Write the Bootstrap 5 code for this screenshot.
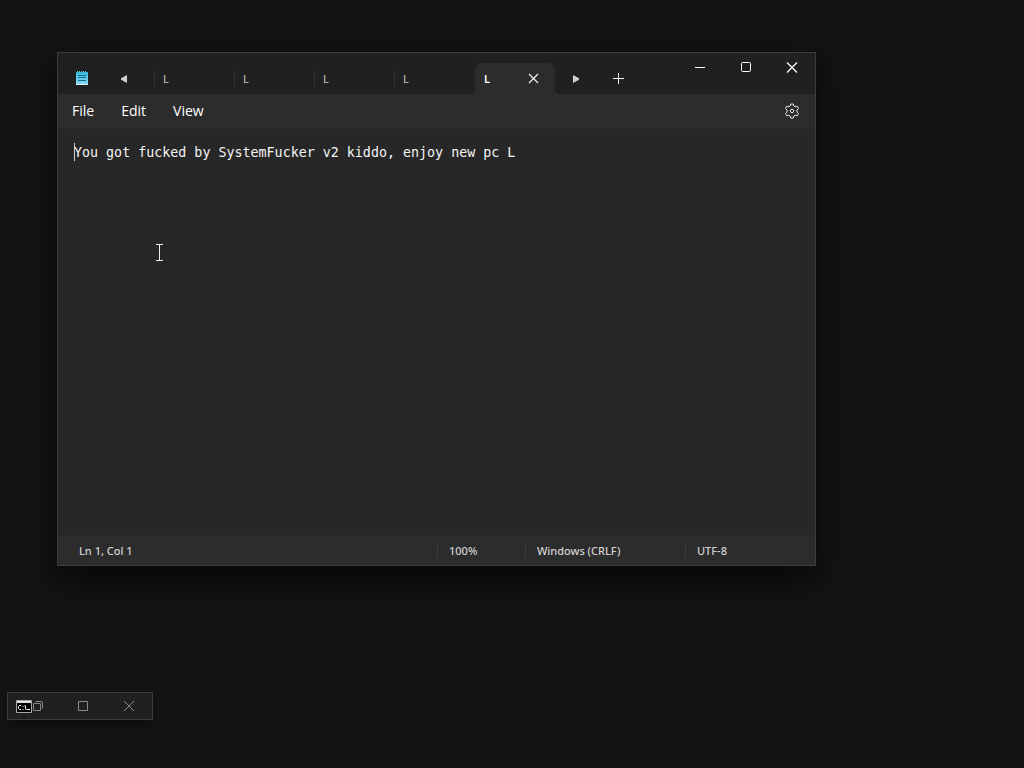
<!DOCTYPE html>
<html lang="en">
<head>
<meta charset="utf-8">
<meta name="viewport" content="width=device-width, initial-scale=1">
<title>L - Notepad</title>
<link href="https://cdn.jsdelivr.net/npm/bootstrap@5.3.0/dist/css/bootstrap.min.css" rel="stylesheet">
<style>
  body { background: #141414; color: #fff; font-family: "Noto Sans", "Open Sans", sans-serif; font-size: 13px; line-height: 20px; }
  button { background: none; border: 0; padding: 0; color: inherit; }
  svg { display: block; }
  .desktop { min-height: 100vh; overflow: hidden; }
  .desk-window { border: 1px solid #3c3c3c; background: #202020; }
  .notepad { top: 52px; left: 57px; right: 208px; box-shadow: 0 12px 28px 4px rgba(0,0,0,.6); }
  .title-row { height: 41px; }
  .app-icon { width: 48px; padding-top: 8px; }
  .scroll-left { width: 36px; margin-right: 12px; padding-top: 10px; }
  .strip-btn { width: 42px; padding-top: 10px; }
  .doc-tab { width: 80px; height: 31px; padding: 0 15px 0 9px; font-size: 11px; color: #c8c8c8; position: relative; }
  .doc-tab:not(.current)::before { content: ""; position: absolute; left: 0; top: 8px; height: 16px; border-left: 1px solid #333; }
  .doc-tab.current { margin-left: 1px; background: #2c2c2c; border-radius: 7px 7px 0 0; color: #fff; font-weight: 600; }
  .doc-tab.current::before, .doc-tab.current::after { content: ""; position: absolute; bottom: 0; width: 4px; height: 4px; }
  .doc-tab.current::before { left: -4px; background: radial-gradient(circle at 0 0, transparent 4px, #2c2c2c 4px); }
  .doc-tab.current::after { right: -4px; background: radial-gradient(circle at 100% 0, transparent 4px, #2c2c2c 4px); }
  .win-btn { width: 46px; height: 29px; }
  .menu-row { height: 35px; background: #2c2c2c; padding: 0 15px 2px 14px; }
  .menu-row .menus { gap: 27px; }
  .menu-row .menus button { font-family: "Open Sans", sans-serif; font-size: 14px; line-height: 22px; }
  .editor { height: 406px; background: #272727; border: 0; color: #f4f4f4; resize: none; outline: 0; padding: 14px 16px; font: 10pt/20px "DejaVu Sans Mono", monospace; }
  .caret { left: 16px; top: 14px; width: 1px; height: 18px; background: #ccc; }
  .pointer { left: 97px; top: 115px; }
  .status-row { height: 30px; background: #2c2c2c; color: #d2d2d2; font-size: 11px; font-weight: 500; padding: 2px 0 0 21px; }
  .status-cell { padding-left: 11px; line-height: 16px; border-left: 1px solid #3b3b3b; }
  .zoom-cell { width: 88px; }
  .ending-cell { width: 160px; }
  .encoding-cell { width: 130px; }
  .console { left: 7px; bottom: 48px; height: 28px; padding-left: 8px; color: #8a8a8a; box-shadow: 0 6px 14px rgba(0,0,0,.35); }
</style>
</head>
<body>
<main class="desktop position-relative">
  <section class="desk-window notepad position-absolute" aria-label="Notepad">
    <header class="title-row d-flex align-items-stretch">
      <div class="app-icon d-flex align-items-center justify-content-center">
        <svg width="14" height="16" viewBox="0 0 14 16">
          <defs><linearGradient id="page" x2="0" y2="1"><stop stop-color="#35b7d8"/><stop offset="1" stop-color="#8bd8f2"/></linearGradient></defs>
          <path fill="url(#page)" d="M1 2h12v12H1z"/><path fill="#e4eef0" d="M1 14h12v1H1z"/>
          <path stroke="#68c9e0" d="M2.500 1v1M4.500 1v1M6.500 1v1M8.500 1v1M10.500 1v1"/>
          <path stroke="#08748d" d="M3 5.500h8M3 7.500h8M3 10.500h8"/>
        </svg>
      </div>
      <button class="scroll-left d-flex align-items-center justify-content-center" type="button" aria-label="Scroll tabs left">
        <svg width="8" height="8"><path fill="#d0d0d0" d="M7 0v8L1 4.700V3.300z"/></svg>
      </button>
      <nav class="d-flex align-items-end" aria-label="Documents">
        <button class="doc-tab text-start" type="button">L</button>
        <button class="doc-tab text-start" type="button">L</button>
        <button class="doc-tab text-start" type="button">L</button>
        <button class="doc-tab text-start" type="button">L</button>
        <div class="doc-tab current d-flex align-items-center justify-content-between">
          <span>L</span>
          <button type="button" aria-label="Close tab"><svg width="12" height="11"><path stroke="#f0f0f0" stroke-width="1.200" d="M1 1l9 9M10 1l-9 9"/></svg></button>
        </div>
      </nav>
      <button class="strip-btn d-flex align-items-center justify-content-center" type="button" aria-label="Scroll tabs right">
        <svg width="8" height="8"><path fill="#d0d0d0" d="M1 0v8l6-3.300V3.300z"/></svg>
      </button>
      <button class="strip-btn d-flex align-items-center justify-content-center" type="button" aria-label="New tab">
        <svg width="11" height="11"><path stroke="#eee" d="M0 5.500h11M5.500 0v11"/></svg>
      </button>
      <div class="d-flex ms-auto">
        <button class="win-btn d-flex align-items-center justify-content-center" type="button" aria-label="Minimize"><svg width="10" height="11"><path stroke="#fff" d="M0 5.500h10"/></svg></button>
        <button class="win-btn d-flex align-items-center justify-content-center" type="button" aria-label="Maximize"><svg width="10" height="11"><rect x=".5" y=".5" width="9" height="9" rx="1" fill="none" stroke="#fff"/></svg></button>
        <button class="win-btn d-flex align-items-center justify-content-center" type="button" aria-label="Close"><svg width="12" height="11"><path stroke="#fff" stroke-width="1.200" d="M1 .5l10 10M11 .5l-10 10"/></svg></button>
      </div>
    </header>
    <div class="menu-row d-flex align-items-center justify-content-between">
      <div class="menus d-flex">
        <button type="button">File</button><button type="button">Edit</button><button type="button">View</button>
      </div>
      <button type="button" aria-label="Settings">
        <svg width="16" height="16" viewBox="0 0 16 16" fill="none" stroke="#e0e0e0"><path stroke-linejoin="round" d="M6.700 1h2.600l.5 2 1.400.8 2-.6 1.300 2.300L13 7v2l1.500 1.500-1.300 2.300-2-.6-1.400.8-.5 2H6.700l-.5-2-1.400-.8-2 .6-1.300-2.300L3 9V7L1.500 5.500l1.300-2.300 2 .6L6.200 3z"/><circle cx="8" cy="8" r="1.700"/></svg>
      </button>
    </div>
    <div class="position-relative">
      <textarea class="editor d-block w-100" aria-label="Text editor" spellcheck="false">You got fucked by SystemFucker v2 kiddo, enjoy new pc L</textarea>
      <span class="caret position-absolute"></span>
      <svg class="pointer position-absolute" width="9" height="17"><path fill="none" stroke="#eee" d="M1 .5h7M1 16.500h7M4.500 1v15"/></svg>
    </div>
    <footer class="status-row d-flex align-items-center">
      <span class="flex-grow-1">Ln 1, Col 1</span>
      <span class="status-cell zoom-cell">100%</span>
      <span class="status-cell ending-cell">Windows (CRLF)</span>
      <span class="status-cell encoding-cell">UTF-8</span>
    </footer>
  </section>

  <section class="desk-window console position-absolute d-flex align-items-center" aria-label="Console">
    <svg width="16" height="13" viewBox="0 0 16 13"><path fill="#000" stroke="#aaa" d="M.5.5h15v12H.5z"/><path fill="#ddd" d="M1 1h14v2H1z"/><path fill="none" stroke="#fff" d="M5 5.500H3.500L2.500 6.500v2l1 1H5M7 6v1M7 9v1M9 5l1 5M11.500 9v1M12 9.500h2"/></svg>
    <button type="button" aria-label="Restore"><svg width="12" height="12" fill="none" stroke="currentColor"><path d="M1.500 3.500h7v7h-7zM3.500 1.500H9q1.500 0 1.500 1.500v5.500"/></svg></button>
    <button class="win-btn d-flex align-items-center justify-content-center ms-3" type="button" aria-label="Maximize"><svg width="10" height="10"><path fill="none" stroke="currentColor" d="M.5.5h9v9h-9z"/></svg></button>
    <button class="win-btn d-flex align-items-center justify-content-center" type="button" aria-label="Close"><svg width="10" height="10"><path stroke="currentColor" d="M0 0l10 10M10 0L0 10"/></svg></button>
  </section>
</main>
<script src="https://cdn.jsdelivr.net/npm/bootstrap@5.3.0/dist/js/bootstrap.bundle.min.js"></script>
</body>
</html>
